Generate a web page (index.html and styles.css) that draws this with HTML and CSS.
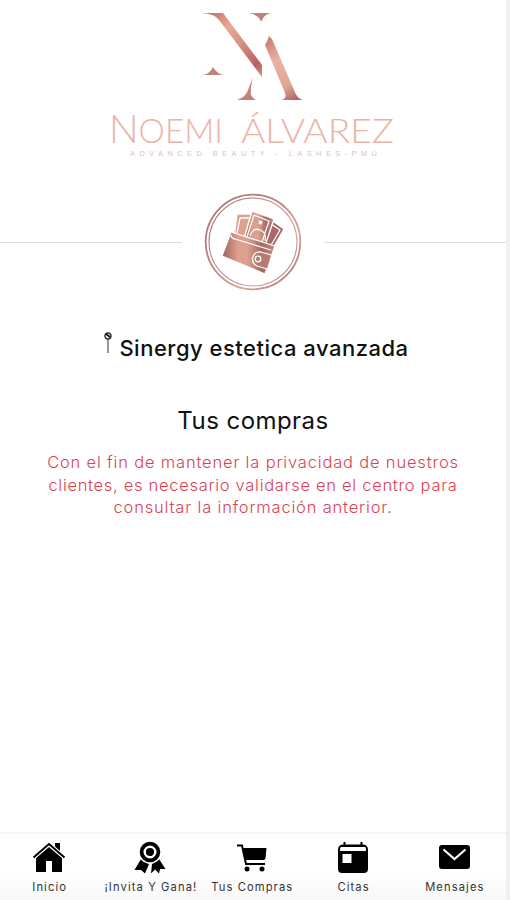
FILE: index.html
```html
<!DOCTYPE html>
<html lang="es">
<head>
<meta charset="utf-8">
<title>Tus compras</title>
<link rel="stylesheet" href="styles.css">
</head>
<body>
<div class="app">
  <header class="brand">
    <svg width="506" height="166" viewBox="0 0 506 166">
      <defs>
        <linearGradient id="rose" gradientUnits="userSpaceOnUse" x1="208" y1="12" x2="262" y2="76">
          <stop offset="0" stop-color="#bd7068"/><stop offset=".3" stop-color="#e9aa96"/><stop offset=".6" stop-color="#d08a7d"/><stop offset=".85" stop-color="#b9605e"/><stop offset="1" stop-color="#d58b80"/>
        </linearGradient>
        <linearGradient id="roseLeg" gradientUnits="userSpaceOnUse" x1="266" y1="38" x2="300" y2="100">
          <stop offset="0" stop-color="#c77b72"/><stop offset=".35" stop-color="#e9b3a4"/><stop offset=".75" stop-color="#dfa494"/><stop offset="1" stop-color="#a65c60"/>
        </linearGradient>
      </defs>
      <path fill="url(#rose)" d="M202 13h21L262 65v12L219 20Q215 14 202 13z"/>
      <path fill="#c5807a" d="M249 13h22q-7 1-10 9q-2-7-12-9zM202 75q8-1 11-8q4 7 11 8zM237 100q9-3 11-10l5-13q-3 12-2 18q2 4 5 5z"/>
      <path fill="url(#roseLeg)" d="M265 45q3-5 4-9l3 3L294 90q3 9 9 10H281q6-1 4-7z"/>
      <g fill="#e9b4a6" class="wordmark">
        <text x="109" y="143" font-size="39" textLength="114" lengthAdjust="spacingAndGlyphs">N<tspan font-size="33">OEMI</tspan></text>
        <text x="241" y="143" font-size="33" textLength="153" lengthAdjust="spacingAndGlyphs">ÁLVAREZ</text>
      </g>
      <text class="tagline" x="130" y="155.500" textLength="247">ADVANCED BEAUTY - LASHES-PMU</text>
    </svg>
  </header>

  <div class="divider">
    <svg width="98" height="98" viewBox="0 0 98 98">
      <defs>
        <linearGradient id="copper" x1="0" y1="0" x2="1" y2="0">
          <stop offset="0" stop-color="#96605f"/><stop offset=".3" stop-color="#dea08d"/><stop offset=".48" stop-color="#dca08f"/><stop offset=".75" stop-color="#a66865"/><stop offset="1" stop-color="#c88b7e"/>
        </linearGradient>
        <linearGradient id="ring" x1="0" y1="0" x2="1" y2="1">
          <stop offset="0" stop-color="#a87678"/><stop offset=".4" stop-color="#b98482"/><stop offset=".7" stop-color="#d3a59b"/><stop offset="1" stop-color="#a06c70"/>
        </linearGradient>
      </defs>
      <g fill="none" stroke="url(#ring)">
        <circle cx="49" cy="49" r="47.300" stroke-width="1.800"/>
        <circle cx="49" cy="49" r="44" stroke-width="1.100"/>
      </g>
      <g stroke="#fff" stroke-width="1.300" stroke-linejoin="round">
        <path fill="#a76866" d="M66 26L80 36L68 57L56 48z"/>
        <path fill="none" d="M67 31l9 6-10 17"/>
        <path fill="#dda38f" d="M33 21l17 0-6 27-14-4z"/>
        <path fill="none" d="M36 25h10l-5 18M36 25l-3 15"/>
        <path fill="url(#copper)" d="M48 18L70 26L61 53L40 46z"/>
        <path fill="none" d="M50 22l15 6-7 21M50 22l-7 22M46 43q3-9 10-6t5 11"/>
        <path fill="#fff" d="M56 28l2 1-1 2-2-1z"/>
        <path fill="url(#copper)" d="M27 39L71 53L61 81L18 63z"/>
        <path fill="none" d="M27 42q0 3 4 4l36 11"/>
        <path fill="#b97a72" d="M67 62l-10-3q-6-1-8 5t4 9l10 3"/>
        <circle cx="54" cy="66" r="2.800" fill="#b97a72"/>
      </g>
    </svg>
  </div>

  <main>
    <div class="centre">
      <svg class="pin" width="10" height="22" viewBox="0 0 10 22">
        <path d="M5 6v15" stroke="#999" stroke-width="2"/>
        <circle cx="5" cy="4" r="3" fill="#fff" stroke="#333" stroke-width="1.400"/>
        <path d="M3 2l4 3" stroke="#111" stroke-width="1.800"/>
      </svg>
      <span class="centre-name">Sinergy estetica avanzada</span>
    </div>
    <h1>Tus compras</h1>
    <p class="notice">Con el fin de mantener la privacidad de nuestros<br><span class="tight">clientes, es necesario validarse en el centro para</span><br>consultar la información anterior.</p>
  </main>

  <nav>
    <a><svg width="34" height="34" viewBox="0 0 34 34"><path d="M4 17L17 6l13 11v14H20V20h-6v11H4z"/><path d="M23 2h5v9l-5-4z"/><path d="M2 16L17 3l15 13" fill="none" stroke="#fff" stroke-width="4"/><path d="M1.500 16.500L17 3l15.500 13.500" fill="none" stroke="#000" stroke-width="2"/></svg><span>Inicio</span></a>
    <a><svg width="34" height="34" viewBox="0 0 34 34"><path d="M8 18l8 5-4 9.500-4-3.500-6.500 0zM26 18l-7 5-1 9.500 4-4 4 4 1-4.500 5.500 0z"/><circle cx="17" cy="11" r="11.800" fill="#fff"/><circle cx="17" cy="11" r="10.300"/><circle cx="17" cy="11" r="5.300" fill="none" stroke="#fff" stroke-width="2.400"/></svg><span>¡Invita Y Gana!</span></a>
    <a><svg width="34" height="34" viewBox="0 0 34 34"><path d="M8 7h23.500l-1 10q0 2-2 2H10z"/><path d="M2 4.500h5l4 18.500h19" fill="none" stroke="#000" stroke-width="2"/><circle cx="12" cy="28" r="2.500"/><circle cx="27" cy="28" r="2.500"/></svg><span>Tus Compras</span></a>
    <a><svg width="34" height="34" viewBox="0 0 34 34"><path d="M7.500 1h2v2.500h15V1h2v2.500q5.500 0 5.500 5.500v19q0 4-4 4H6q-4 0-4-4V9q0-5.500 5.500-5.500z"/><path fill="#fff" d="M5 6h24q1 0 1 4H4q0-4 1-4zM6.500 13h9v9h-9z"/></svg><span>Citas</span></a>
    <a><svg width="34" height="34" viewBox="0 0 34 34"><rect x="2" y="4" width="31" height="24" rx="3"/><path d="M6.500 8.500l11 9.500L28.500 8.500" fill="none" stroke="#fff" stroke-width="2.200"/></svg><span>Mensajes</span></a>
  </nav>
</div>
</body>
</html>
```
FILE: styles.css
```css
* { box-sizing: border-box; }
body { margin: 0; background: #f0f0f0; font-family: Inter, "Liberation Sans", sans-serif; color: #111; }
svg { display: block; }
.app { width: 506px; height: 900px; background: #fff; display: flex; flex-direction: column; }
.brand { height: 193px; }
.wordmark { font-family: Lato, sans-serif; font-weight: 300; }
.tagline { font-family: "Liberation Sans", sans-serif; font-size: 7.500px; fill: #ecbcaf; }
.divider { height: 98px; display: flex; align-items: center; justify-content: space-between; gap: 22px; }
.divider::before, .divider::after { content: ""; flex: 1; height: 1px; background: #dedede; }
main { flex: 1; text-align: center; }
.centre { display: flex; justify-content: center; margin-top: 41px; height: 32px; gap: 6px; padding-left: 6px; }
.pin { flex: none; }
.centre-name { font-size: 22px; font-weight: 500; line-height: 32px; letter-spacing: .5px; white-space: nowrap; }
h1 { margin: 40px 0 0; font-size: 24px; font-weight: 400; line-height: 34px; letter-spacing: .45px; }
.notice { margin: 13px 0 0; font-size: 16.500px; font-weight: 300; line-height: 22.500px; letter-spacing: .82px; color: #dc3f55; white-space: nowrap; }
.tight { letter-spacing: .7px; }
nav { height: 68px; border-top: 2px solid #f5f5f5; background: linear-gradient(#fff 55%, #f8f8f8); display: grid; grid-template-columns: repeat(5, 101.300px); padding-top: 7px; }
nav a { display: flex; flex-direction: column; align-items: center; gap: 3px; font-size: 11.200px; line-height: 18px; color: #333; letter-spacing: 1.100px; white-space: nowrap; }
nav svg { margin-right: 3px; }
nav span { margin-right: 2px; }
```
